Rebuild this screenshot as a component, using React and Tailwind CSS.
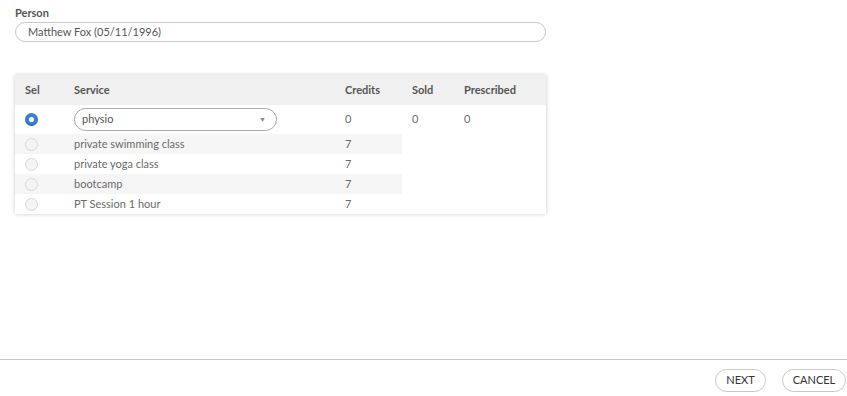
import React from 'react';

const services = [
  { name: 'private swimming class', credits: 7 },
  { name: 'private yoga class', credits: 7 },
  { name: 'bootcamp', credits: 7 },
  { name: 'PT Session 1 hour', credits: 7 },
];

function Radio({ checked }) {
  if (checked) {
    return (
      <span className="flex h-[13px] w-[13px] items-center justify-center rounded-full bg-[#3c7fcf] shadow-[inset_0_-1px_1px_rgba(0,0,0,0.25)]">
        <span className="block h-[5px] w-[5px] rounded-full bg-white" />
      </span>
    );
  }
  return <span className="block h-[13px] w-[13px] rounded-full border border-[#d8d8d8] bg-[#f4f4f4]" />;
}

export default function App() {
  return (
    <div className="flex h-[396px] w-full flex-col bg-white font-['Lato',sans-serif] text-[11px] text-[#6a6a6a]">
      <div className="flex-1 px-[15px] pt-[6px]">
        <label className="block text-[11px] font-bold leading-[14px] text-[#555]">Person</label>
        <div className="mt-[2px] flex h-[20px] w-[531px] items-center rounded-full border border-[#c8c8c8] px-[12px] text-[#555]">
          Matthew Fox (05/11/1996)
        </div>

        <div className="mt-[33px] w-[531px] bg-white shadow-[0_0_4px_rgba(0,0,0,0.22)]">
          <table className="w-full border-collapse text-left">
            <thead>
              <tr className="h-[30px] bg-[#f0f0f0] text-[#555]">
                <th className="w-[49px] p-0 pl-[10px] font-bold">Sel</th>
                <th className="w-[271px] p-0 pl-[10px] font-bold">Service</th>
                <th className="w-[67px] p-0 pl-[10px] font-bold">Credits</th>
                <th className="w-[52px] p-0 pl-[10px] font-bold">Sold</th>
                <th className="p-0 pl-[10px] font-bold">Prescribed</th>
              </tr>
            </thead>
            <tbody>
              <tr className="h-[29px]">
                <td className="p-0 pl-[10px]"><Radio checked /></td>
                <td className="p-0 pl-[10px]">
                  <div className="flex h-[23px] w-[203px] items-center justify-between rounded-full border border-[#aaa] pl-[7px] pr-[10px] text-[#555]">
                    <span>physio</span>
                    <span className="text-[7px] text-[#888]">▼</span>
                  </div>
                </td>
                <td className="p-0 pl-[10px]">0</td>
                <td className="p-0 pl-[10px]">0</td>
                <td className="p-0 pl-[10px]">0</td>
              </tr>
              {services.map((s, i) => (
                <tr key={s.name} className="h-[20px]">
                  <td className={`p-0 pl-[10px] ${i % 2 === 0 ? 'bg-[#f6f6f6]' : ''}`}><Radio /></td>
                  <td className={`p-0 pl-[10px] ${i % 2 === 0 ? 'bg-[#f6f6f6]' : ''}`}>{s.name}</td>
                  <td className={`p-0 pl-[10px] ${i % 2 === 0 ? 'bg-[#f6f6f6]' : ''}`}>{s.credits}</td>
                  <td className="p-0" />
                  <td className="p-0" />
                </tr>
              ))}
            </tbody>
          </table>
        </div>
      </div>

      <div className="flex h-[37px] items-start justify-end gap-[16px] border-t border-[#c8c8c8] pr-[1px] pt-[9px]">
        <button className="h-[23px] w-[51px] rounded-full border border-[#c8c8c8] text-[11px] text-[#333]">NEXT</button>
        <button className="h-[23px] w-[64px] rounded-full border border-[#c8c8c8] text-[11px] text-[#333]">CANCEL</button>
      </div>
    </div>
  );
}
